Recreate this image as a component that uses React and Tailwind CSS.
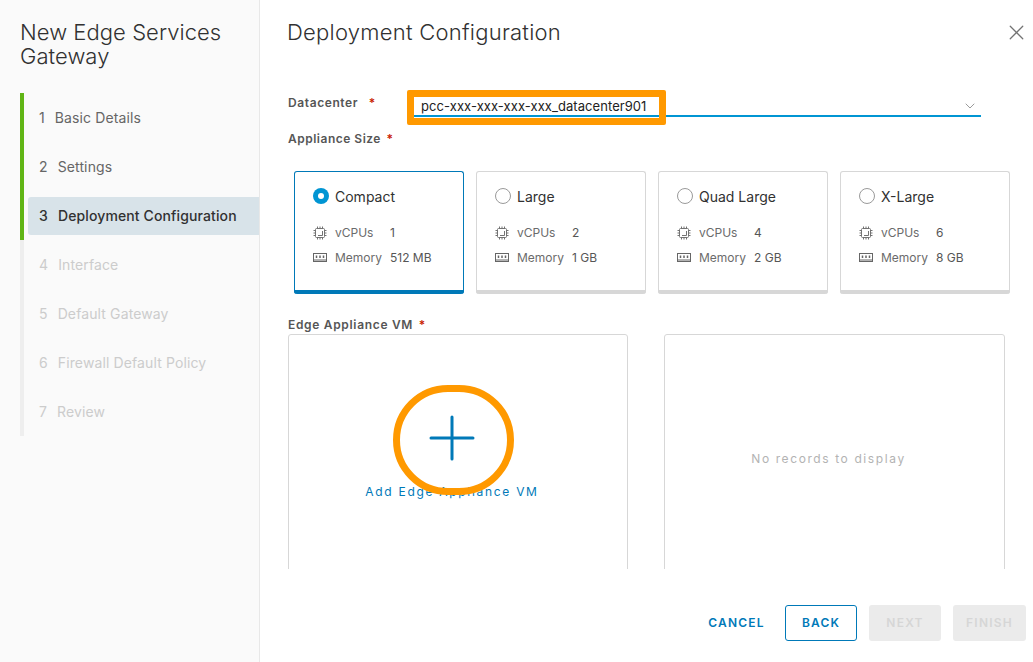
import { X, ChevronDown } from 'lucide-react';

const font = "font-['Inter','Liberation_Sans',sans-serif]";

const steps = [
    { n: 1, label: "Basic Details", done: true },
    { n: 2, label: "Settings", done: true },
    { n: 3, label: "Deployment Configuration", done: true, active: true },
    { n: 4, label: "Interface" },
    { n: 5, label: "Default Gateway" },
    { n: 6, label: "Firewall Default Policy" },
    { n: 7, label: "Review" },
];

const sizes = [
    { name: "Compact", vcpu: 1, memory: "512 MB", selected: true },
    { name: "Large", vcpu: 2, memory: "1 GB" },
    { name: "Quad Large", vcpu: 4, memory: "2 GB" },
    { name: "X-Large", vcpu: 6, memory: "8 GB" },
];

const CpuIcon = () => (
    <svg width="14" height="14" viewBox="0 0 14 14" fill="none" stroke="#737373" strokeWidth="1">
        <rect x="2.5" y="2.5" width="9" height="9" rx="1" />
        <path d="M5 9.5h4.5V5" />
        <path d="M4.5 0.5v2M7 0.5v2M9.5 0.5v2M4.5 11.5v2M7 11.5v2M9.5 11.5v2M0.5 4.5h2M0.5 7h2M0.5 9.5h2M11.5 4.5h2M11.5 7h2M11.5 9.5h2" />
    </svg>
);

const MemoryIcon = () => (
    <svg width="14" height="10" viewBox="0 0 14 10" fill="none" stroke="#666666" strokeWidth="1">
        <rect x="0.5" y="0.5" width="13" height="8" />
        <path d="M3.5 2.5v2.5M7 2.5v2.5M10.5 2.5v2.5" strokeWidth="1.5" />
        <path d="M0.5 7h13" />
    </svg>
);

const SizeCard = ({ size }) => (
    <div className={`w-[170px] h-[123px] rounded-[3px] border border-b-0 bg-white flex flex-col ${size.selected ? "border-[#0079b8]" : "border-[#d7d7d7]"}`}>
        <div className="flex-1 pl-[18px] pt-[14px]">
            <div className="flex items-center gap-[6px] h-[20px]">
                {size.selected
                    ? <span className="w-4 h-4 rounded-full bg-[#0095d3] flex items-center justify-center"><span className="w-[6px] h-[6px] rounded-full bg-white"></span></span>
                    : <span className="w-4 h-4 rounded-full border border-[#9a9a9a] bg-white"></span>}
                <span className="text-[14px] text-[#313131]">{size.name}</span>
            </div>
            <div className="flex items-center mt-[19px] h-[16px] text-[12px] text-[#6b6b6b]">
                <span className="w-[22px] flex"><CpuIcon /></span>
                <span className="w-[55px]">vCPUs</span>
                <span className="text-[#565656]">{size.vcpu}</span>
            </div>
            <div className="flex items-center mt-[9px] h-[16px] text-[12px] text-[#6b6b6b]">
                <span className="w-[22px] flex"><MemoryIcon /></span>
                <span className="w-[55px]">Memory</span>
                <span className="text-[#565656]">{size.memory}</span>
            </div>
        </div>
        <div className={`h-[4px] -mx-px rounded-b-[3px] ${size.selected ? "bg-[#0079b8]" : "bg-[#d7d7d7]"}`}></div>
    </div>
);

const App = () => {
    return (
        <div className={`${font} w-[1033px] h-[662px] flex bg-white overflow-hidden relative`}>
            <aside className="w-[260px] shrink-0 bg-[#fafafa] border-r border-[#e8e8e8]">
                <h1 className="pl-5 pt-[20px] text-[22px] leading-[24px] font-light tracking-[0.05px] text-[#313131] h-[93px]">New Edge Services Gateway</h1>
                <div className="pl-5">
                    {steps.map((s) => (
                        <div key={s.n} className={`h-[49px] pt-[6px] pl-1 border-l-4 ${s.done ? "border-[#60b515]" : "border-[#eeeeee]"}`}>
                            <div className={`h-[38px] pl-[11px] pb-[2px] flex items-center gap-[10px] text-[14px] tracking-[0.12px] rounded-l-[3px] ${s.active ? "bg-[#d8e3e9] text-[#313131] font-medium" : s.done ? "text-[#666666]" : "text-[#cccccc]"}`}>
                                <span>{s.n}</span>
                                <span>{s.label}</span>
                            </div>
                        </div>
                    ))}
                </div>
            </aside>

            <main className="flex-1 min-w-0 relative">
                <div className="h-[334px] pl-[28px]">
                    <div className="h-[88px] pt-[20px] -ml-px flex justify-between">
                        <h2 className="text-[22px] leading-[24px] font-light tracking-[0.25px] text-[#313131]">Deployment Configuration</h2>
                        <button className="mr-[4px] h-[24px] w-[26px] text-[#737373] flex items-center justify-center"><X size={25} strokeWidth={1.2} /></button>
                    </div>
                    <div className="flex items-center h-[29px] w-[693px]">
                        <label className="w-[125px] text-[12px] font-semibold tracking-[0.6px] text-[#565656]">Datacenter <span className="text-[#c92100] ml-[7px]">*</span></label>
                        <div className="flex-1 h-[29px] pt-[10px] flex items-center justify-between border-b-2 border-[#0095d3] pl-2 pr-[3px]">
                            <span className="text-[13px] tracking-[0.06px] text-[#222222]">pcc-xxx-xxx-xxx-xxx_datacenter901</span>
                            <ChevronDown size={16} className="text-[#9a9a9a] -mt-[2px]" strokeWidth={1.5} />
                        </div>
                    </div>
                    <label className="block mt-[14px] text-[12px] leading-[16px] font-semibold tracking-[0.5px] text-[#565656]">Appliance Size <span className="text-[#c92100] ml-[2px]">*</span></label>
                    <div className="flex gap-[12px] ml-[6px] mt-[24px]">
                        {sizes.map((s) => <SizeCard key={s.name} size={s} />)}
                    </div>
                    <label className="block mt-[23px] text-[12px] leading-[16px] font-semibold tracking-[0.68px] text-[#565656]">Edge Appliance VM <span className="text-[#c92100] ml-[2px]">*</span></label>
                </div>

                <div className="h-[235px] pl-[28px] flex gap-[36px] overflow-hidden">
                    <div className="w-[340px] h-[300px] rounded-t-[3px] border border-[#d7d7d7] flex flex-col items-center pt-[80px]">
                        <svg width="46" height="46" viewBox="0 0 46 46" stroke="#0079b8" strokeWidth="3" strokeLinecap="round" className="ml-[-12px]">
                            <path d="M23 2v42M2 23h42" />
                        </svg>
                        <span className="mt-[22px] ml-[-12px] text-[12px] tracking-[1.7px] text-[#0079b8]">Add Edge Appliance VM</span>
                    </div>
                    <div className="w-[341px] h-[300px] rounded-t-[3px] border border-[#d7d7d7] flex justify-center pt-[115px]">
                        <span className="ml-[-12px] text-[12px] tracking-[1.6px] text-[#b3b3b3]">No records to display</span>
                    </div>
                </div>

                <div className="flex items-center justify-end pr-[7px] pt-[36px] gap-[12px] text-[12px] font-semibold tracking-[1.2px]">
                    <button className="h-9 w-[57px] mr-[8px] text-[#0079b8]">CANCEL</button>
                    <button className="h-9 w-[72px] rounded-[3px] border border-[#0079b8] text-[#0079b8]">BACK</button>
                    <button className="h-9 w-[72px] rounded-[3px] bg-[#ebebeb] text-[#d6d6d6]">NEXT</button>
                    <button className="h-9 w-[73px] rounded-[3px] bg-[#ebebeb] text-[#d6d6d6]">FINISH</button>
                </div>

                {/* orange annotations drawn over the screenshot */}
                <div className="absolute left-[147px] top-[90px] w-[259px] h-[35px] border-[7px] border-[#ff9900] rounded-[2px] pointer-events-none"></div>
                <div className="absolute left-[133px] top-[385px] w-[121px] h-[110px] border-[7px] border-[#ff9900] rounded-full pointer-events-none"></div>
            </main>
        </div>
    );
};

export default App;
